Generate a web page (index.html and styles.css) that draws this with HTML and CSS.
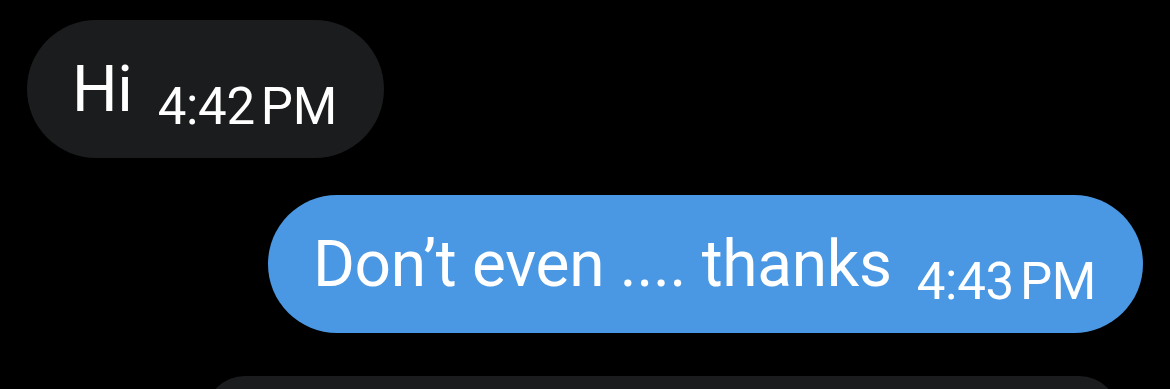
FILE: index.html
```html
<!DOCTYPE html>
<html lang="en">
<head>
<meta charset="UTF-8">
<meta name="viewport" content="width=device-width, initial-scale=1.0">
<title>Messages</title>
<link rel="stylesheet" href="styles.css">
</head>
<body>
    <div class="thread">
        <div class="bubble incoming">
            <p class="text">Hi<span class="time">4:42&#8239;PM</span></p>
        </div>
        <div class="bubble outgoing">
            <p class="text">Don’t even .... thanks<span class="time">4:43&#8239;PM</span></p>
        </div>
        <div class="bubble incoming next"></div>
    </div>
</body>
</html>
```

FILE: styles.css
```css
/* Chat thread */
body {
    margin: 0;
    background-color: #000;
    font-family: Roboto, "Liberation Sans", sans-serif;
    color: #fff;
    overflow: hidden;
}

.thread {
    display: flex;
    flex-direction: column;
    height: 389px;
    padding: 20px 27px 0;
    box-sizing: border-box;
    overflow: hidden;
}

.bubble {
    display: flex;
    align-items: flex-start;
    flex-shrink: 0;
    box-sizing: border-box;
    height: 138px;
    padding: 38px 47px 0 45px;
    border-radius: 69px;
}

.incoming {
    align-self: flex-start;
    background-color: #1a1c1d;
}

.outgoing {
    align-self: flex-end;
    margin-top: 37px;
    background-color: #4a98e4;
}

.next {
    margin-top: 43px;
    margin-left: 178px;
    width: 914px;
    border-radius: 40px;
}

.text {
    margin: 0;
    font-size: 64px;
    line-height: 1;
    letter-spacing: -0.3px;
    white-space: nowrap;
}

.time {
    margin-left: 25px;
    font-size: 51px;
    letter-spacing: -0.3px;
    vertical-align: -13px;
}
```
